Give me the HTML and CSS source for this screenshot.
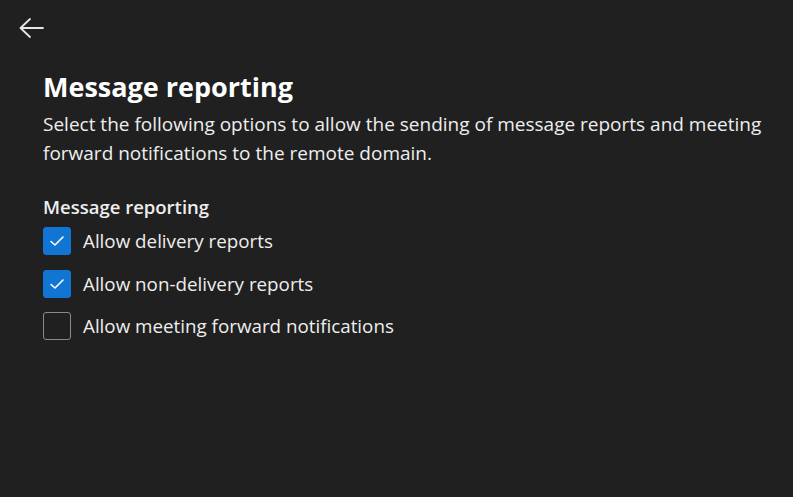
FILE: index.html
```html
<!DOCTYPE html>
<html>
<head>
<meta charset="utf-8">
<link rel="stylesheet" href="styles.css">
</head>
<body>
<div class="page">
  <button class="back" aria-label="Back">
    <svg width="28" height="24" viewBox="0 0 28 24"><path d="M13 3 L3.5 12 L13 21 M3.5 12 H26" fill="none" stroke="#e6e6e6" stroke-width="1.8" stroke-linecap="round" stroke-linejoin="round"/></svg>
  </button>
  <main class="content">
    <h1 class="title">Message reporting</h1>
    <p class="desc">Select the following options to allow the sending of message reports and meeting forward notifications to the remote domain.</p>
    <h2 class="group">Message reporting</h2>
    <div class="options">
      <label class="opt"><span class="box checked"><svg width="16" height="12" viewBox="0 0 16 12"><path d="M2 6.5 L6 10 L14 2" fill="none" stroke="#fff" stroke-width="1.6" stroke-linecap="round" stroke-linejoin="round"/></svg></span><span>Allow delivery reports</span></label>
      <label class="opt"><span class="box checked"><svg width="16" height="12" viewBox="0 0 16 12"><path d="M2 6.5 L6 10 L14 2" fill="none" stroke="#fff" stroke-width="1.6" stroke-linecap="round" stroke-linejoin="round"/></svg></span><span>Allow non-delivery reports</span></label>
      <label class="opt"><span class="box"></span><span>Allow meeting forward notifications</span></label>
    </div>
  </main>
</div>
</body>
</html>
```
FILE: styles.css
```css
html, body {
  margin: 0;
  height: 100%;
  background: #202020;
}
body {
  font-family: "Open Sans", "Noto Sans", sans-serif;
  color: #f0f0f0;
}
.page {
  padding: 16px 0 0 17px;
}
.back {
  display: block;
  background: none;
  border: 0;
  padding: 0;
  width: 28px;
  height: 24px;
  cursor: pointer;
}
.content {
  padding: 29px 20px 0 26px;
}
.title {
  margin: 0;
  font-size: 27px;
  font-weight: 700;
  line-height: 36px;
  color: #ffffff;
}
.desc {
  margin: 4.5px 0 0;
  font-size: 19px;
  line-height: 29px;
  color: #eeeeee;
}
.group {
  margin: 27.5px 0 0;
  font-size: 18.5px;
  font-weight: 600;
  line-height: 24px;
  color: #eeeeee;
}
.options {
  display: flex;
  flex-direction: column;
  gap: 14.5px;
  margin-top: 8px;
}
.opt {
  display: flex;
  align-items: center;
  gap: 12px;
  font-size: 18.8px;
  line-height: 28px;
  color: #eeeeee;
}
.box {
  width: 28px;
  height: 28px;
  box-sizing: border-box;
  border: 1.5px solid #8a8a8a;
  border-radius: 3px;
  display: flex;
  align-items: center;
  justify-content: center;
}
.box.checked {
  background: #1075d3;
  border-color: #1075d3;
}
```
